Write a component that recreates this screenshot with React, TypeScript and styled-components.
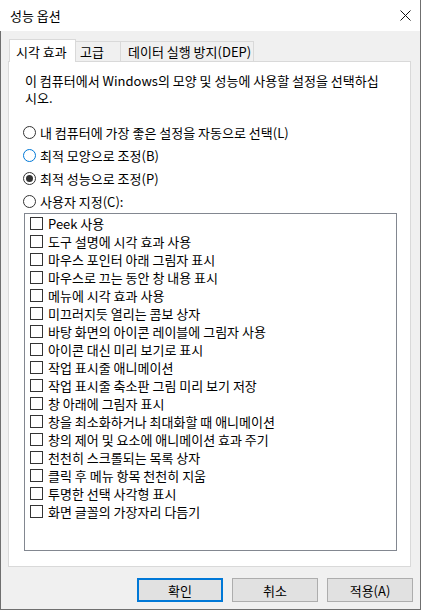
import React from 'react';
import styled, { createGlobalStyle } from 'styled-components';

const options = [
  'Peek 사용',
  '도구 설명에 시각 효과 사용',
  '마우스 포인터 아래 그림자 표시',
  '마우스로 끄는 동안 창 내용 표시',
  '메뉴에 시각 효과 사용',
  '미끄러지듯 열리는 콤보 상자',
  '바탕 화면의 아이콘 레이블에 그림자 사용',
  '아이콘 대신 미리 보기로 표시',
  '작업 표시줄 애니메이션',
  '작업 표시줄 축소판 그림 미리 보기 저장',
  '창 아래에 그림자 표시',
  '창을 최소화하거나 최대화할 때 애니메이션',
  '창의 제어 및 요소에 애니메이션 효과 주기',
  '천천히 스크롤되는 목록 상자',
  '클릭 후 메뉴 항목 천천히 지움',
  '투명한 선택 사각형 표시',
  '화면 글꼴의 가장자리 다듬기',
];

const radios = [
  { label: '내 컴퓨터에 가장 좋은 설정을 자동으로 선택(L)', checked: false, focused: false },
  { label: '최적 모양으로 조정(B)', checked: false, focused: true },
  { label: '최적 성능으로 조정(P)', checked: true, focused: false },
  { label: '사용자 지정(C):', checked: false, focused: false },
];

const tabs = [
  { label: '시각 효과', width: 67, pad: 6, active: true },
  { label: '고급', width: 46, pad: 4, active: false },
  { label: '데이터 실행 방지(DEP)', width: 134, pad: 7, active: false },
];

const App: React.FC = () => {
  return (
    <>
      <GlobalStyle />
      <Window>
        <TitleBar>
          <span>성능 옵션</span>
          <CloseIcon width="11" height="11" viewBox="0 0 11 11">
            <path d="M0.5 0.5 L10.5 10.5 M10.5 0.5 L0.5 10.5" stroke="#111" strokeWidth="1" />
          </CloseIcon>
        </TitleBar>
        <Body>
          <TabRow>
            {tabs.map(t => (
              <Tab key={t.label} $active={t.active} $width={t.width} $pad={t.pad}>
                {t.label}
              </Tab>
            ))}
          </TabRow>
          <Panel>
            <Description>
              이 컴퓨터에서 Windows의 모양 및 성능에 사용할 설정을 선택하십시오.
            </Description>
            <RadioGroup>
              {radios.map(r => (
                <RadioRow key={r.label}>
                  <RadioCircle $focused={r.focused}>{r.checked && <RadioDot />}</RadioCircle>
                  <span>{r.label}</span>
                </RadioRow>
              ))}
            </RadioGroup>
            <ListBox>
              {options.map(o => (
                <CheckRow key={o}>
                  <CheckBox />
                  <span>{o}</span>
                </CheckRow>
              ))}
            </ListBox>
          </Panel>
          <ButtonRow>
            <Button $default>확인</Button>
            <Button>취소</Button>
            <Button>적용(A)</Button>
          </ButtonRow>
        </Body>
      </Window>
    </>
  );
};

const GlobalStyle = createGlobalStyle`
  body {
    margin: 0;
    font-family: "Noto Sans CJK KR", "Noto Sans", sans-serif;
    font-size: 13px;
    color: #000;
  }
`;

const Window = styled.div`
  width: 421px;
  height: 610px;
  box-sizing: border-box;
  display: flex;
  flex-direction: column;
  border-right: 1px solid #6f6f6f;
`;

const TitleBar = styled.div`
  height: 31px;
  flex-shrink: 0;
  background: #fff;
  display: flex;
  align-items: center;
  justify-content: space-between;
  padding: 0 9px 0 10px;
  line-height: 15px;
`;

const CloseIcon = styled.svg`
  display: block;
`;

const Body = styled.div`
  flex: 1;
  min-height: 0;
  background: #f0f0f0;
  border-left: 1px solid #6f6f6f;
  border-bottom: 1px solid #6f6f6f;
  padding: 8px 9px 7px 7px;
  display: flex;
  flex-direction: column;
`;

const TabRow = styled.div`
  height: 22px;
  display: flex;
  align-items: flex-end;
  padding-left: 1px;
  position: relative;
  z-index: 1;
`;

const Tab = styled.div<{ $active: boolean; $width: number; $pad: number }>`
  box-sizing: border-box;
  width: ${p => p.$width}px;
  height: ${p => (p.$active ? 23 : 20)}px;
  margin-bottom: ${p => (p.$active ? -1 : 0)}px;
  padding-left: ${p => p.$pad}px;
  background: ${p => (p.$active ? '#fff' : '#f0f0f0')};
  border: 1px solid #d9d9d9;
  border-bottom: none;
  display: flex;
  align-items: center;
  line-height: 15px;
  white-space: nowrap;
  & + & {
    margin-left: ${p => (p.$active ? 0 : -1)}px;
  }
  &:nth-child(2) {
    margin-left: 0;
  }
`;

const Panel = styled.div`
  flex: 1;
  min-height: 0;
  background: #fff;
  border: 1px solid #d9d9d9;
  padding: 10px 14px 15px 14px;
  display: flex;
  flex-direction: column;
`;

const Description = styled.p`
  margin: 0 0 15px 2px;
  line-height: 17px;
  width: 356px;
`;

const RadioGroup = styled.div`
  display: flex;
  flex-direction: column;
`;

const RadioRow = styled.div`
  height: 23px;
  display: flex;
  align-items: center;
  gap: 4px;
  line-height: 15px;
`;

const RadioCircle = styled.span<{ $focused: boolean }>`
  box-sizing: border-box;
  width: 13px;
  height: 13px;
  border-radius: 50%;
  border: 1px solid ${p => (p.$focused ? '#0078d7' : '#333')};
  background: #fff;
  display: flex;
  align-items: center;
  justify-content: center;
`;

const RadioDot = styled.span`
  width: 7px;
  height: 7px;
  border-radius: 50%;
  background: #333;
`;

const ListBox = styled.div`
  box-sizing: border-box;
  height: 338px;
  margin-left: 1px;
  width: 373px;
  border: 1px solid #828790;
  display: flex;
  flex-direction: column;
`;

const CheckRow = styled.div`
  height: 18px;
  flex-shrink: 0;
  display: flex;
  align-items: center;
  gap: 5px;
  padding-left: 5px;
  line-height: 15px;
  white-space: nowrap;
`;

const CheckBox = styled.span`
  box-sizing: border-box;
  width: 13px;
  height: 13px;
  border: 1px solid #333;
  background: #fff;
`;

const ButtonRow = styled.div`
  margin-top: 11px;
  margin-right: -2px;
  display: flex;
  justify-content: flex-end;
  gap: 9px;
`;

const Button = styled.button<{ $default?: boolean }>`
  box-sizing: border-box;
  width: 86px;
  height: 24px;
  padding: 0;
  font-family: inherit;
  font-size: 13px;
  color: #000;
  background: #e1e1e1;
  border: ${p => (p.$default ? '2px solid #0078d7' : '1px solid #adadad')};
  line-height: 15px;
`;

export default App;
